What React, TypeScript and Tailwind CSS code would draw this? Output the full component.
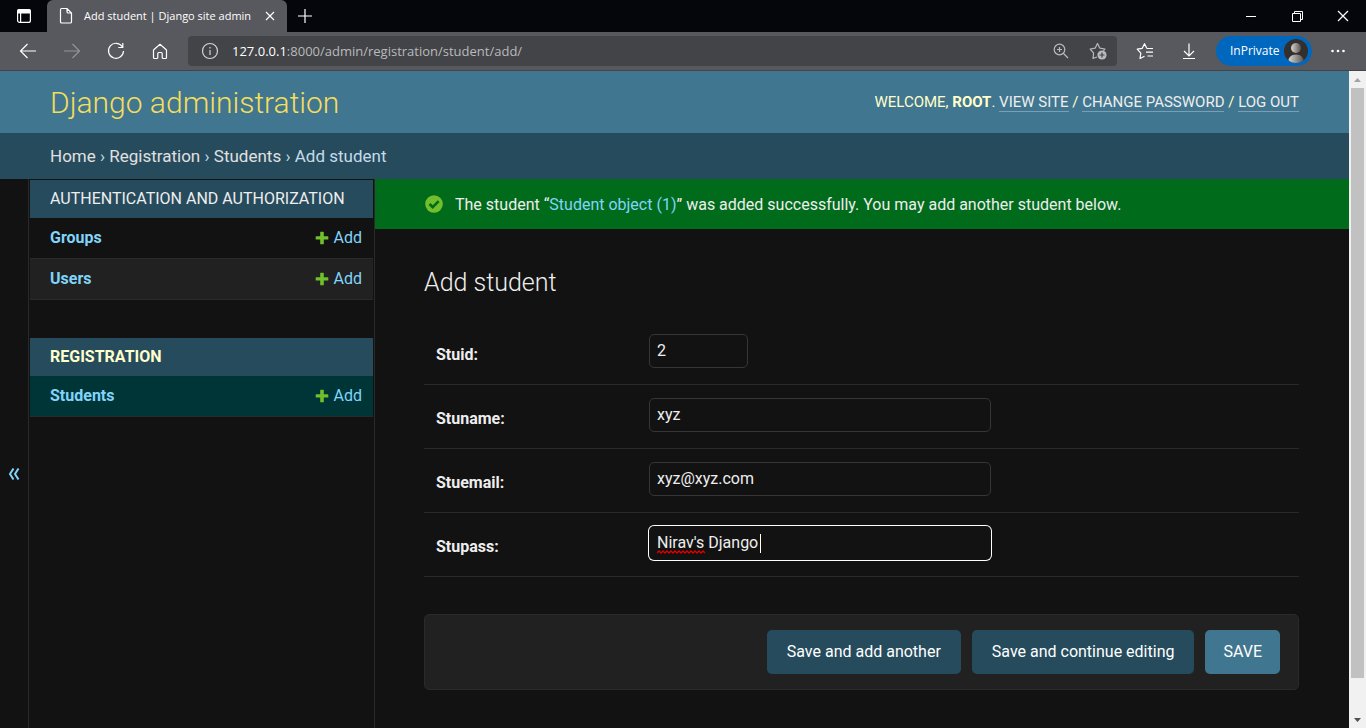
import React from "react";

const stroke = { fill: "none", stroke: "currentColor", strokeWidth: 1.2 } as const;

function TabActionsIcon() {
  return (
    <svg width="16" height="16" viewBox="0 0 16 16" {...stroke}>
      <rect x="1.6" y="1.6" width="12.8" height="12.8" rx="2" />
      <path d="M1.6 3.2q0-1.6 1.6-1.6h9.6q1.6 0 1.6 1.6V5H1.6z" fill="currentColor" />
      <path d="M4.6 5v9.4" />
    </svg>
  );
}

function PageIcon() {
  return (
    <svg className="shrink-0" width="14" height="18" viewBox="0 0 14 18" {...stroke}>
      <path d="M1.5 2.8q0-1.3 1.3-1.3H8l4.5 4.5v8.7q0 1.3-1.3 1.3H2.8q-1.3 0-1.3-1.3zM8 1.5v3.2Q8 6 9.3 6h3.2" />
    </svg>
  );
}

function ArrowIcon({ forward }: { forward?: boolean }) {
  return (
    <svg width="18" height="16" viewBox="0 0 18 16" {...stroke}>
      {forward ? <path d="M1 8h15.4M9.5 1l7 7-7 7" /> : <path d="M17 8H1.6M8.500 1l-7 7 7 7" />}
    </svg>
  );
}

function ReloadIcon() {
  return (
    <svg width="18" height="18" viewBox="0 0 18 18" {...stroke}>
      <path d="M15.500 5A7.500 7.500 0 1 0 16.500 9M15.800 1v4.500h-4.500" />
    </svg>
  );
}

function HomeIcon() {
  return (
    <svg width="16" height="17" viewBox="0 0 16 17" {...stroke}>
      <path d="M8 1.300 1.500 7v7.500q0 1 1 1h2.300q1 0 1-1V10.500q0-1 1-1h2.400q1 0 1 1v4q0 1 1 1h2.300q1 0 1-1V7z" strokeLinejoin="round" />
    </svg>
  );
}

function InfoIcon() {
  return (
    <svg width="18" height="18" viewBox="0 0 18 18" {...stroke}>
      <circle cx="9" cy="9" r="7.500" />
      <path d="M9 8v5M9 5v1.500" />
    </svg>
  );
}

function ZoomInIcon() {
  return (
    <svg width="16" height="16" viewBox="0 0 16 16" {...stroke}>
      <circle cx="6.500" cy="6.500" r="5.300" />
      <path d="m10.500 10.500 4.500 4.500M4 6.500h5M6.500 4v5" />
    </svg>
  );
}

function StarAddIcon() {
  return (
    <svg width="18" height="18" viewBox="0 0 18 18" {...stroke}>
      <path d="M8 15 4 16.500l.6-5.300L1.200 7l4.900-.8L8.500 1.500l2.400 4.700 5 .8-1.500 1.700" strokeLinejoin="round" />
      <circle cx="13" cy="13" r="4.600" fill="currentColor" stroke="none" />
      <path d="M13 10.500v5M10.500 13h5" stroke="#434448" />
    </svg>
  );
}

function FavoritesIcon() {
  return (
    <svg width="18" height="18" viewBox="0 0 18 18" {...stroke}>
      <path d="M8.500 14.300 4 16.500l.8-5.300L1.200 7.200l4.900-.8L8.500 1.700l2.200 4.400M10.500 6.500H17M10 10.200h7M11.500 14H17" strokeLinejoin="round" />
    </svg>
  );
}

function DownloadIcon() {
  return (
    <svg width="14" height="18" viewBox="0 0 14 18" {...stroke}>
      <path d="M7 1.500v12M2 9l5 5 5-5M1 16.500h12" />
    </svg>
  );
}

function PlusIcon() {
  return (
    <svg width="14" height="14" viewBox="0 0 14 14" fill="#70bf2b">
      <path d="M5.200 1.300q0-.6.600-.6h2.400q.6 0 .6.600v3.900h3.900q.6 0 .6.600v2.100q0 .6-.6.600H8.800v4.200q0 .6-.6.600H5.800q-.6 0-.6-.6V8.500H1.300q-.6 0-.6-.6V5.800q0-.6.600-.6h3.900z" />
    </svg>
  );
}

function TitleBar() {
  return (
    <div className="flex h-8 items-stretch bg-[#05060b] text-white">
      <button aria-label="Tab actions" className="flex w-[47px] items-center justify-center">
        <TabActionsIcon />
      </button>
      <div className="flex w-60 items-center rounded-t-md bg-[#58595e] pl-3 pr-2">
        <PageIcon />
        <span className="ml-[11px] flex-1 whitespace-nowrap text-[11px]">Add student | Django site admin</span>
        <button aria-label="Close tab" className="p-1">
          <svg width="10" height="10" viewBox="0 0 10 10" {...stroke}>
            <path d="m1 1 8 8M9 1 1 9" />
          </svg>
        </button>
      </div>
      <button aria-label="New tab" className="px-2.5">
        <svg width="16" height="16" viewBox="0 0 16 16" {...stroke}>
          <path d="M8 1v14M1 8h14" />
        </svg>
      </button>
      <div className="ml-auto flex">
        <button aria-label="Minimize" className="flex w-[46px] items-center justify-center">
          <svg width="10" height="10" viewBox="0 0 10 10">
            <path d="M0 5h10v1H0z" fill="currentColor" />
          </svg>
        </button>
        <button aria-label="Restore" className="flex w-[46px] items-center justify-center">
          <svg width="11" height="11" viewBox="0 0 11 11" fill="none" stroke="currentColor">
            <path d="M.5 2.500h8v8h-8zM2.500 2.500v-2h8v8h-2" />
          </svg>
        </button>
        <button aria-label="Close" className="flex w-[46px] items-center justify-center">
          <svg width="12" height="12" viewBox="0 0 12 12" {...stroke}>
            <path d="m1 1 10 10M11 1 1 11" />
          </svg>
        </button>
      </div>
    </div>
  );
}

function Toolbar() {
  return (
    <div className="flex h-[39px] items-center border-b border-[#45424a] bg-[#58595e] pr-4 text-white">
      <div className="flex w-[188px] items-center pl-1.5">
        <button aria-label="Back" className="flex w-11 justify-center"><ArrowIcon /></button>
        <button aria-label="Forward" className="flex w-11 justify-center text-[#939499]"><ArrowIcon forward /></button>
        <button aria-label="Refresh" className="flex w-11 justify-center"><ReloadIcon /></button>
        <button aria-label="Home" className="flex w-11 justify-center"><HomeIcon /></button>
      </div>
      <div className="flex h-[30px] flex-1 items-center rounded bg-[#434448] pl-[13px] pr-2.5 text-[#b9babc]">
        <button aria-label="Site information" className="text-[#d5d5d7]"><InfoIcon /></button>
        <div className="ml-[13px] flex-1 pt-px text-[13px]">
          <span className="text-white">127.0.0.1</span>:8000/admin/registration/student/add/
        </div>
        <button aria-label="Zoom" className="mr-5"><ZoomInIcon /></button>
        <button aria-label="Add to favorites"><StarAddIcon /></button>
      </div>
      <button aria-label="Favorites" className="ml-[19px]"><FavoritesIcon /></button>
      <button aria-label="Downloads" className="ml-7"><DownloadIcon /></button>
      <button className="ml-5 flex h-[30px] items-center rounded-full bg-[#0067bf] pl-3.5 pr-1 text-xs">
        <span className="w-[54px] text-left">InPrivate</span>
        <svg width="24" height="24" viewBox="0 0 24 24">
          <defs>
            <linearGradient id="person">
              <stop offset="0" stopColor="#d8d6d4" />
              <stop offset="1" stopColor="#55514f" />
            </linearGradient>
            <clipPath id="disc"><circle cx="12" cy="12" r="12" /></clipPath>
          </defs>
          <g clipPath="url(#disc)">
            <path d="M0 0h24v24H0z" fill="#322f2d" />
            <circle cx="12" cy="9" r="5" fill="url(#person)" />
            <path d="M4 24q0-8.500 8-8.500t8 8.500z" fill="url(#person)" />
          </g>
        </svg>
      </button>
      <button aria-label="Settings and more" className="ml-3.5 px-1">
        <svg width="16" height="4" viewBox="0 0 16 4" fill="currentColor">
          <circle cx="2.500" cy="2" r="1.300" />
          <circle cx="8" cy="2" r="1.300" />
          <circle cx="13.500" cy="2" r="1.300" />
        </svg>
      </button>
    </div>
  );
}

function UserLink({ children }: { children: string }) {
  return <a href="#" className="border-b border-[#7a9fb4] text-[#eee]">{children}</a>;
}

function SiteHeader() {
  return (
    <header className="flex h-[62px] items-center justify-between bg-[#417690] px-[50px] text-[#ffc]">
      <h1 className="text-[30px] font-light text-[#f5dd5d]">Django administration</h1>
      <div className="text-[15px] leading-5 uppercase">
        Welcome, <strong className="font-bold">root</strong>. <UserLink>View site</UserLink> / <UserLink>Change password</UserLink> /{" "}
        <UserLink>Log out</UserLink>
      </div>
    </header>
  );
}

function Breadcrumbs() {
  return (
    <nav aria-label="Breadcrumbs" className="h-[46px] bg-[#264b5d] px-[50px] pt-[11px] text-[17px] leading-6 text-[#c4dce8]">
      <a href="#" className="text-[#e0e0e0]">Home</a> › <a href="#" className="text-[#e0e0e0]">Registration</a> ›{" "}
      <a href="#" className="text-[#e0e0e0]">Students</a> › Add student
    </nav>
  );
}

type Model = { name: string; tone: string };

function AppModule({ title, titleClass, models }: { title: string; titleClass: string; models: Model[] }) {
  return (
    <table className="w-full border-separate border-spacing-0 text-[#81d4fa]">
      <caption className={`h-[38px] bg-[#264b5d] px-5 text-left leading-[38px] ${titleClass}`}>
        <a href="#">{title}</a>
      </caption>
      <tbody>
        {models.map((m) => (
          <tr key={m.name} className={`h-[41px] ${m.tone}`}>
            <th scope="row" className="border-b border-[#2a2a2a] pb-px pl-5 text-left font-bold"><a href="#">{m.name}</a></th>
            <td className="border-b border-[#2a2a2a] pb-px pr-[11px]">
              <a href="#" className="flex items-center justify-end gap-[5px]"><PlusIcon />Add</a>
            </td>
          </tr>
        ))}
      </tbody>
    </table>
  );
}

function Sidebar() {
  return (
    <>
      <button aria-label="Toggle navigation" className="flex w-[29px] items-center justify-center border-r border-[#2a2a2a] pt-10 text-[#81d4fa]">
        <svg width="12" height="12" viewBox="0 0 12 12" fill="none" stroke="currentColor" strokeWidth="2">
          <path d="M5.500.5 2 6l3.500 5.500M10.500.5 7 6l3.500 5.500" />
        </svg>
      </button>
      <nav aria-label="Sidebar" className="w-[346px] space-y-[38px] border-r border-[#2a2a2a] px-px pt-px text-base">
        <AppModule
          title="AUTHENTICATION AND AUTHORIZATION"
          titleClass="text-base text-[#eee]"
          models={[{ name: "Groups", tone: "bg-[#121212]" }, { name: "Users", tone: "bg-[#212121]" }]}
        />
        <AppModule
          title="REGISTRATION"
          titleClass="text-base font-bold text-[#ffc]"
          models={[{ name: "Students", tone: "bg-[#003538]" }]}
        />
      </nav>
    </>
  );
}

type FieldProps = { id: string; label: string; value: string; type?: string; width?: string; focused?: boolean };

function Field({ id, label, value, type = "text", width = "w-[342px]", focused }: FieldProps) {
  return (
    <div className="flex h-16 items-start border-b border-[#2a2a2a] px-3 pt-[13px]">
      <label htmlFor={id} className="w-[213px] pt-[9px] font-bold leading-6 text-[#eee]">{label}:</label>
      <div className="relative">
        <input
          id={id}
          type={type}
          defaultValue={value}
          className={`h-[34px] rounded-[5px] border bg-[#121212] px-[7px] pb-0.5 text-[#eee] outline-none [appearance:textfield] ${width} ${focused ? "border-transparent ring-1 ring-white" : "border-[#363636]"}`}
        />
        {focused && (
          <>
            <svg className="absolute left-2 top-6 h-1 w-12" viewBox="0 0 48 4" fill="none" stroke="#e00000" strokeWidth="1.300">
              <path d="M0 3l2-2 2 2 2-2 2 2 2-2 2 2 2-2 2 2 2-2 2 2 2-2 2 2 2-2 2 2 2-2 2 2 2-2 2 2 2-2 2 2 2-2 2 2 2-2 2 2" />
            </svg>
            <span className="absolute left-[111px] top-2 h-[19px] w-px bg-white" />
          </>
        )}
      </div>
    </div>
  );
}

function StudentForm() {
  return (
    <main className="min-w-0 flex-1 text-base">
      <div className="flex h-[50px] items-center bg-[#006b1b] px-[50px] text-[#eee]">
        <svg width="18" height="18" viewBox="0 0 18 18">
          <circle cx="9" cy="9" r="8.800" fill="#70bf2b" />
          <path d="m4.500 9 3.200 3.200 6-6" fill="none" stroke="#006b1b" strokeWidth="2.600" />
        </svg>
        <p className="ml-3 pt-0.5">
          The student “<a href="#" className="text-[#81d4fa]">Student object (1)</a>” was added successfully. You may add another student below.
        </p>
      </div>
      <div className="px-[50px] pt-[38px]">
        <h2 className="-ml-px text-[25px] font-light leading-8 text-[#eee]">Add student</h2>
        <form className="-ml-px mt-[22px]" onSubmit={(e) => e.preventDefault()}>
          <Field id="stuid" label="Stuid" value="2" type="number" width="w-[99px]" />
          <Field id="stuname" label="Stuname" value="xyz" />
          <Field id="stuemail" label="Stuemail" value="xyz@xyz.com" type="email" />
          <Field id="stupass" label="Stupass" value="Nirav's Django" focused />
          <div className="mt-[37px] flex justify-end gap-[11px] rounded-[5px] border border-[#2a2a2a] bg-[#212121] py-[15px] pr-[18px] text-white">
            <button type="submit" className="h-11 rounded-[5px] bg-[#264b5d] px-5">Save and add another</button>
            <button type="submit" className="h-11 rounded-[5px] bg-[#264b5d] px-5">Save and continue editing</button>
            <button type="submit" className="h-11 rounded-[5px] bg-[#417690] px-[18px]">SAVE</button>
          </div>
        </form>
      </div>
    </main>
  );
}

function ScrollTrack() {
  return (
    <div aria-hidden="true" className="flex w-[17px] flex-col items-stretch bg-[#f1f1f1] px-0.5">
      <div className="flex h-[17px] items-center justify-center">
        <svg width="7" height="4" viewBox="0 0 7 4"><path d="M3.500 0 7 4H0z" fill="#a3a3a3" /></svg>
      </div>
      <div className="flex-[590] bg-[#c1c1c1]" />
      <div className="flex-[33]" />
      <div className="flex h-[17px] items-center justify-center">
        <svg width="7" height="4" viewBox="0 0 7 4"><path d="M0 0h7L3.500 4z" fill="#505050" /></svg>
      </div>
    </div>
  );
}

export default function App() {
  return (
    <div className="flex min-h-screen flex-col bg-[#121212] font-['Open_Sans',sans-serif]">
      <TitleBar />
      <Toolbar />
      <div className="flex flex-1">
        <div className="flex min-w-0 flex-1 flex-col font-[Roboto,sans-serif]">
          <SiteHeader />
          <Breadcrumbs />
          <div className="flex flex-1">
            <Sidebar />
            <StudentForm />
          </div>
        </div>
        <ScrollTrack />
      </div>
    </div>
  );
}
